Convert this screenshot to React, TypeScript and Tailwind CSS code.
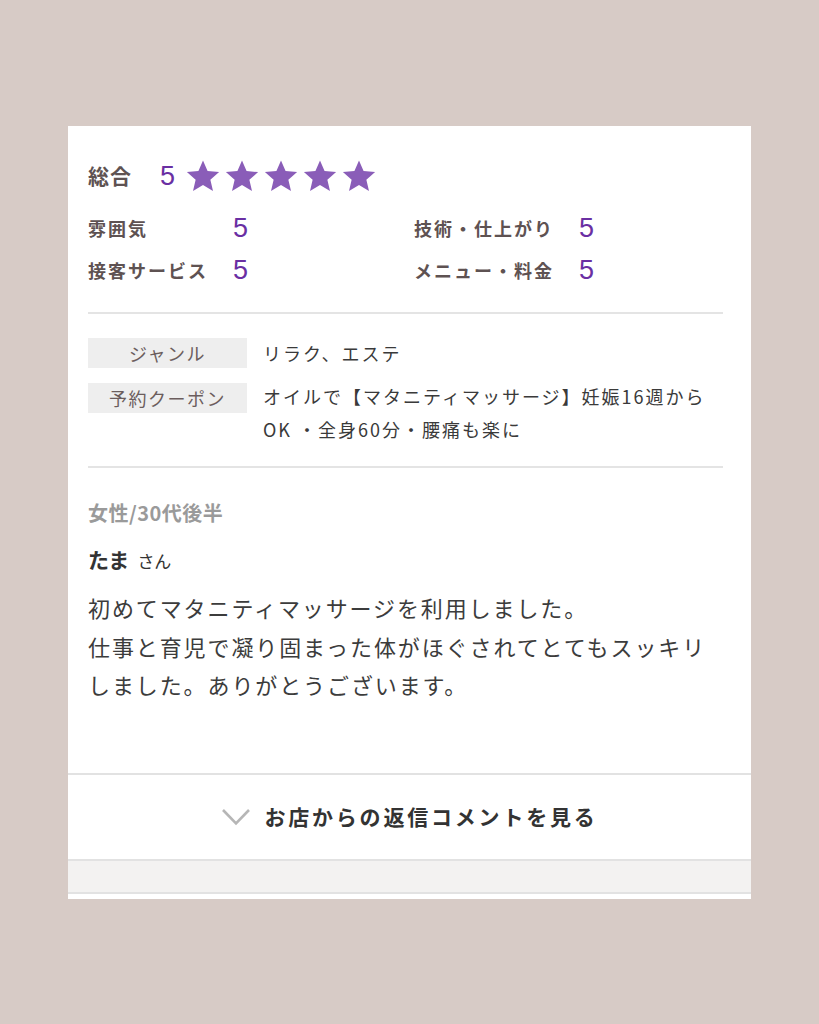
const jp = { fontFamily: '"Noto Sans CJK JP", "Noto Sans", sans-serif' };
const num = { fontFamily: '"Liberation Sans", sans-serif' };

function Star() {
  return (
    <svg viewBox="0 0 24 24" className="w-[36px] h-[36px]">
      <path
        d="M12 1.6l3.05 7.1 7.7.68-5.84 5.08 1.75 7.54L12 18.02 5.34 22l1.75-7.54L1.25 9.38l7.7-.68z"
        fill="#8a5db8"
      />
    </svg>
  );
}

function Score({ label, value, labelWidth }: { label: string; value: string; labelWidth: string }) {
  return (
    <div className="flex items-center h-[42px]">
      <span className={`${labelWidth} text-[18px] font-bold text-[#5e5252] tracking-[2px]`}>{label}</span>
      <span className="text-[27px] leading-none text-[#6a2fa3]" style={num}>
        {value}
      </span>
    </div>
  );
}

export default function App() {
  return (
    <div className="min-h-[1024px] bg-[#d7cbc6] pt-[126px] pl-[68px]" style={jp}>
      <div className="w-[683px] bg-white">
        <div className="pl-5 pr-7 pt-[30px]">
          <div className="flex items-center h-[40px]">
            <span className="text-[21px] font-bold text-[#5e5252] w-[72px] tracking-[1px]">総合</span>
            <span className="text-[27px] leading-none text-[#6a2fa3] mr-[10px]" style={num}>
              5
            </span>
            <div className="flex gap-[3px]">
              <Star />
              <Star />
              <Star />
              <Star />
              <Star />
            </div>
          </div>

          <div className="grid grid-cols-[326px_1fr] mt-[11px]">
            <Score label="雰囲気" value="5" labelWidth="w-[145px]" />
            <Score label="技術・仕上がり" value="5" labelWidth="w-[165px]" />
            <Score label="接客サービス" value="5" labelWidth="w-[145px]" />
            <Score label="メニュー・料金" value="5" labelWidth="w-[165px]" />
          </div>

          <div className="h-[2px] bg-[#e4e4e4] mt-[21px]" />

          <div className="pt-[24px] pb-[20px] flex flex-col gap-[15px]">
            <div className="flex items-start">
              <div className="w-[159px] h-[30px] bg-[#eeeeee] flex items-center justify-center text-[18px] text-[#6b5d5d] tracking-[1.5px] shrink-0">
                ジャンル
              </div>
              <div className="pl-4 text-[18px] leading-[30px] text-[#3a3a3a] tracking-[2px]">リラク、エステ</div>
            </div>
            <div className="flex items-start">
              <div className="w-[159px] h-[30px] bg-[#eeeeee] flex items-center justify-center text-[18px] text-[#6b5d5d] tracking-[1.5px] shrink-0">
                予約クーポン
              </div>
              <div className="pl-4 -mt-[3px] text-[18px] leading-[33px] text-[#3a3a3a] tracking-[2px]">
                オイルで【マタニティマッサージ】妊娠16週から
                <br />
                OK ・全身60分・腰痛も楽に
              </div>
            </div>
          </div>

          <div className="h-[2px] bg-[#e4e4e4]" />

          <div className="pt-[27px] text-[20px] font-bold text-[#9a9a9a] leading-[36px] tracking-[0.5px]">女性/30代後半</div>
          <div className="mt-[10px] flex items-baseline gap-[8px] text-[#333333] leading-[36px]">
            <span className="text-[21px] font-bold">たま</span>
            <span className="text-[17px]">さん</span>
          </div>
          <p className="mt-[9px] text-[22px] leading-[38.5px] text-[#3c3c3c] tracking-[1.9px] pb-[69px]">
            初めてマタニティマッサージを利用しました。
            <br />
            仕事と育児で凝り固まった体がほぐされてとてもスッキリ
            <br />
            しました。ありがとうございます。
          </p>
        </div>

        <div className="border-t-2 border-[#e2e2e2] h-[86px] flex items-center justify-center gap-[13px]">
          <svg viewBox="0 0 30 18" className="w-[30px] h-[18px]">
            <polyline points="2,2 15,15.5 28,2" fill="none" stroke="#b6b6b6" strokeWidth="2.6" />
          </svg>
          <span className="text-[21px] font-bold text-[#333333] tracking-[2.8px]">お店からの返信コメントを見る</span>
        </div>
        <div className="border-t-2 border-b-2 border-[#e2e2e2] h-[35px] bg-[#f3f2f1]" />
        <div className="h-[5px] bg-white" />
      </div>
    </div>
  );
}
